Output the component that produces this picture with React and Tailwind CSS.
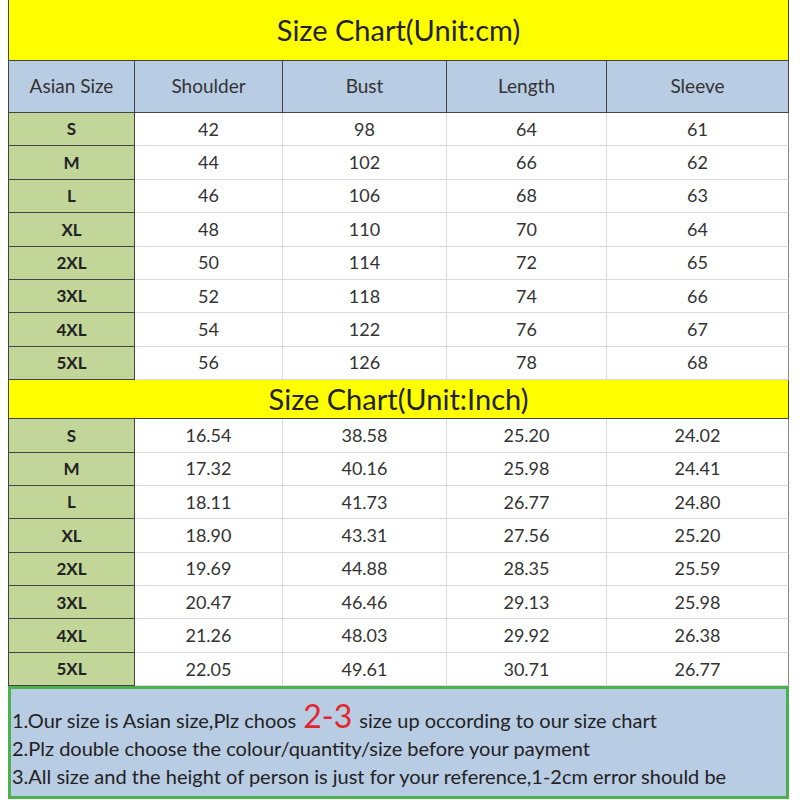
import React from 'react';

const sizes = ['S', 'M', 'L', 'XL', '2XL', '3XL', '4XL', '5XL'];

const cmRows = [
  [42, 98, 64, 61],
  [44, 102, 66, 62],
  [46, 106, 68, 63],
  [48, 110, 70, 64],
  [50, 114, 72, 65],
  [52, 118, 74, 66],
  [54, 122, 76, 67],
  [56, 126, 78, 68]
];

const inchRows = [
  ['16.54', '38.58', '25.20', '24.02'],
  ['17.32', '40.16', '25.98', '24.41'],
  ['18.11', '41.73', '26.77', '24.80'],
  ['18.90', '43.31', '27.56', '25.20'],
  ['19.69', '44.88', '28.35', '25.59'],
  ['20.47', '46.46', '29.13', '25.98'],
  ['21.26', '48.03', '29.92', '26.38'],
  ['22.05', '49.61', '30.71', '26.77']
];

const cols = 'grid grid-cols-[127px_148px_164px_160px_182px]';

function Title({ children, tall }) {
  return (
    <div
      className={`flex items-center justify-center bg-[#ffff00] border-x border-[#444] text-[#222] text-[29px] ${
        tall ? 'h-[60px]' : 'h-[38px]'
      }`}
    >
      {children}
    </div>
  );
}

function DataRows({ rows }) {
  return rows.map((row, i) => (
    <div key={i} className={`${cols} h-[33.4px]`}>
      <div className="flex items-center justify-center bg-[#c2d69a] border-x border-b border-[#444] font-bold text-[17px] text-[#222]">
        {sizes[i]}
      </div>
      {row.map((v, j) => (
        <div
          key={j}
          className={`flex items-center justify-center bg-white border-b border-r border-[#d9d9d9] text-[18px] text-[#333] ${
            j === 3 ? 'border-r-[#888]' : ''
          }`}
        >
          {v}
        </div>
      ))}
    </div>
  ));
}

export default function App() {
  return (
    <div className="w-[800px] h-[800px] bg-white pl-2 overflow-hidden" style={{ fontFamily: 'Lato, "Open Sans", sans-serif' }}>
      <div className="w-[781px]">
        <Title tall>Size Chart(Unit:cm)</Title>
        <div className={`${cols} h-[53px] bg-[#b8cce4] border-y border-[#444] text-[19px] text-[#333]`}>
          {['Asian Size', 'Shoulder', 'Bust', 'Length', 'Sleeve'].map((h, i) => (
            <div key={h} className={`flex items-center justify-center border-r border-[#444] ${i === 0 ? 'border-l' : ''}`}>
              {h}
            </div>
          ))}
        </div>
        <DataRows rows={cmRows} />
        <Title>Size Chart(Unit:Inch)</Title>
        <div className="border-t border-[#444]">
          <DataRows rows={inchRows} />
        </div>
        <div className="h-[113px] bg-[#b8cce4] border-[3px] border-[#4caf50] pl-[1px] pt-[13px] text-[20px] leading-[28px] text-[#222]">
          <div className="flex items-baseline">
            1.Our size is Asian size,Plz choos
            <span className="text-[#e3262b] text-[32px] mx-[7px] leading-[28px]">2-3</span>
            size up occording to our size chart
          </div>
          <div>2.Plz double choose the colour/quantity/size before your payment</div>
          <div>3.All size and the height of person is just for your reference,1-2cm error should be</div>
        </div>
      </div>
    </div>
  );
}
